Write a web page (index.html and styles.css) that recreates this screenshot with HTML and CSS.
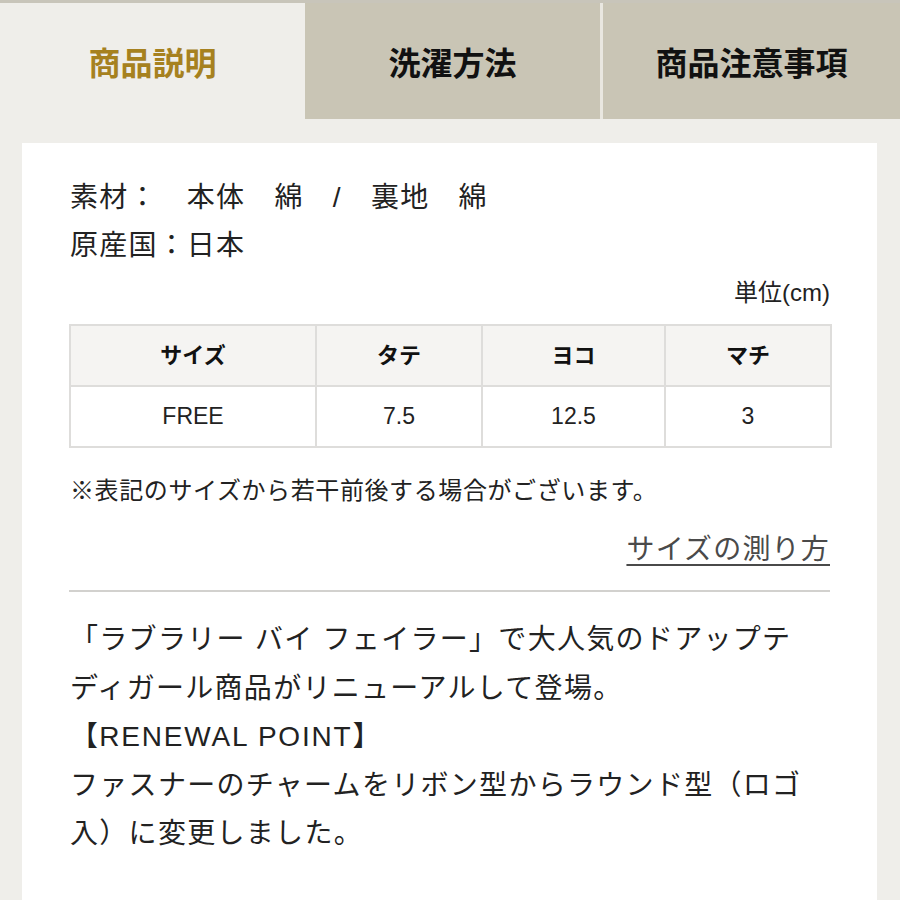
FILE: index.html
```html
<!DOCTYPE html>
<html lang="ja">
<head>
<meta charset="utf-8">
<title>商品説明</title>
<link rel="stylesheet" href="styles.css">
</head>
<body>
<nav class="tabs">
  <div class="tab tab-active">商品説明</div>
  <div class="tab">洗濯方法</div>
  <div class="tab tab-last">商品注意事項</div>
</nav>
<main class="page">
  <section class="card">
    <p class="spec">素材：　本体　綿　/　裏地　綿</p>
    <p class="spec">原産国：日本</p>
    <p class="unit">単位(cm)</p>
    <table class="size-table">
      <thead>
        <tr><th class="c1">サイズ</th><th class="c2">タテ</th><th class="c3">ヨコ</th><th class="c4">マチ</th></tr>
      </thead>
      <tbody>
        <tr><td>FREE</td><td>7.5</td><td>12.5</td><td>3</td></tr>
      </tbody>
    </table>
    <p class="note">※表記のサイズから若干前後する場合がございます。</p>
    <p class="link-row"><a class="measure-link" href="#">サイズの測り方</a></p>
    <hr class="divider">
    <p class="desc">「ラブラリー バイ フェイラー」で大人気のドアップテ<br>ディガール商品がリニューアルして登場。<br>【<span class="latin">RENEWAL POINT</span>】<br>ファスナーのチャームをリボン型からラウンド型（ロゴ<br>入）に変更しました。</p>
  </section>
</main>
</body>
</html>
```

FILE: styles.css
```css
* { box-sizing: border-box; }
html, body {
  margin: 0;
  padding: 0;
  background: #efeeea;
  font-family: "Liberation Sans", "Noto Sans CJK JP", sans-serif;
  color: #222;
}
.tabs {
  display: grid;
  grid-template-columns: 305px 295px 300px;
  border-top: 3px solid #c8c5ba;
  height: 119px;
}
.tab {
  display: flex;
  align-items: center;
  justify-content: center;
  background: #c9c5b5;
  font-family: "Noto Sans CJK JP", sans-serif;
  font-size: 32px;
  font-weight: 700;
  color: #111;
}
.tab-active {
  background: #efeeea;
  color: #a6811f;
}
.tab-last {
  border-left: 3px solid #e9e7e0;
}
.page {
  padding: 24px 23px 0 22px;
}
.card {
  background: #fff;
  padding: 31px 47px 60px 48px;
  min-height: 760px;
}
.spec {
  margin: 0;
  font-size: 28px;
  line-height: 48px;
  letter-spacing: 1.2px;
}
.unit {
  margin: 6px 0 0;
  text-align: right;
  font-size: 24px;
  line-height: 34px;
  color: #222;
}
.size-table {
  margin-top: 14px;
  width: 761px;
  margin-left: -1px;
  border-collapse: collapse;
  table-layout: fixed;
}
.size-table th, .size-table td {
  border: 2px solid #dedddb;
  height: 61px;
  text-align: center;
  font-size: 22px;
  padding: 0;
}
.size-table th {
  background: #f5f4f2;
  font-weight: 700;
  color: #111;
  padding-bottom: 5px;
}
.size-table td {
  background: #fff;
  font-weight: 400;
  color: #222;
  font-size: 23px;
}
.c1 { width: 246px; }
.c2 { width: 166px; }
.c3 { width: 183px; }
.c4 { width: 166px; }
.note {
  margin: 25px 0 0;
  font-size: 24px;
  line-height: 36px;
  letter-spacing: 0.6px;
}
.link-row {
  margin: 21px 0 0;
  text-align: right;
  font-size: 28px;
  line-height: 40px;
}
.measure-link {
  color: #4a4a4a;
  text-decoration: underline;
  text-decoration-thickness: 2px;
  text-underline-offset: 5px;
  letter-spacing: 1.2px;
}
.divider {
  margin: 20px 0 0 -1px;
  border: 0;
  height: 2px;
  background: #d2d1ce;
}
.desc {
  margin: 24px 0 0;
  font-size: 28px;
  line-height: 48.5px;
  letter-spacing: 1.3px;
}
.latin {
  letter-spacing: 1.8px;
}
```
